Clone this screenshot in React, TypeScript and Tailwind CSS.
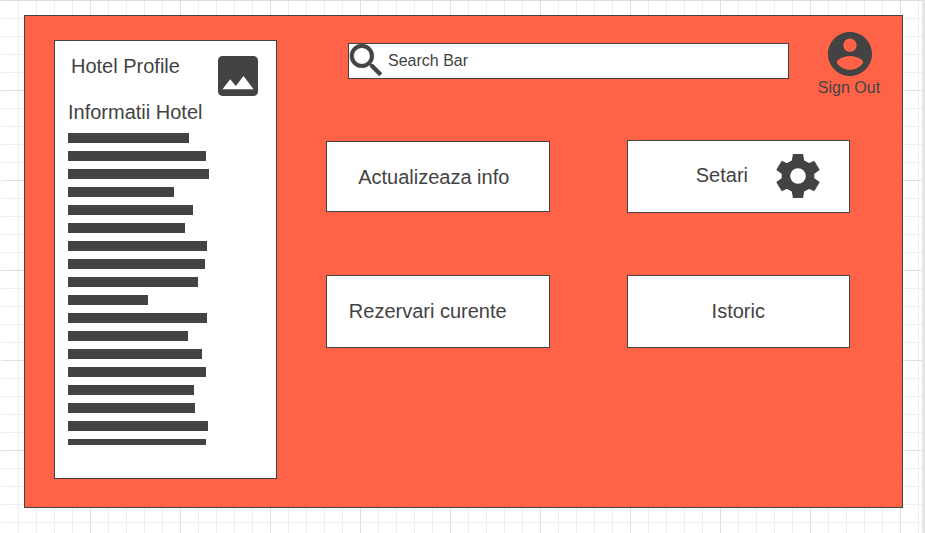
import type { ReactNode } from "react";

const barWidths = [121, 138, 141, 106, 125, 117, 139, 137, 130, 80, 139, 120, 134, 138, 126, 127, 140, 138];

function ImageIcon() {
  return (
    <svg viewBox="3 3 18 18" className="size-10 shrink-0" fill="currentColor" aria-hidden="true">
      <path d="M21 19V5c0-1.100-.9-2-2-2H5c-1.100 0-2 .9-2 2v14c0 1.100.9 2 2 2h14c1.100 0 2-.9 2-2zM8.500 13.500l2.500 3.010L14.500 12l4.500 6H5l3.500-4.500z" />
    </svg>
  );
}

function SearchIcon() {
  return (
    <svg
      viewBox="3 3 17.500 17.500"
      className="size-8 shrink-0 overflow-visible"
      fill="currentColor"
      stroke="currentColor"
      strokeWidth="0.3"
      aria-hidden="true"
    >
      <path d="M15.500 14h-.79l-.28-.27C15.410 12.590 16 11.110 16 9.500 16 5.910 13.090 3 9.500 3S3 5.910 3 9.500 5.910 16 9.500 16c1.610 0 3.090-.59 4.230-1.570l.27.28v.79l5 4.990L20.490 19l-4.990-5zm-6 0C7.010 14 5 11.990 5 9.500S7.010 5 9.500 5 14 7.010 14 9.500 11.990 14 9.500 14z" />
    </svg>
  );
}

function AccountIcon() {
  return (
    <svg viewBox="2 2 20 20" className="size-11 shrink-0" fill="currentColor" aria-hidden="true">
      <path d="M12 2C6.480 2 2 6.480 2 12s4.480 10 10 10 10-4.480 10-10S17.520 2 12 2zm0 3c1.660 0 3 1.340 3 3s-1.340 3-3 3-3-1.340-3-3 1.340-3 3-3zm0 14.200c-2.500 0-4.710-1.280-6-3.220.03-1.990 4-3.080 6-3.080 1.990 0 5.970 1.090 6 3.080-1.290 1.940-3.500 3.220-6 3.220z" />
    </svg>
  );
}

function GearIcon() {
  return (
    <svg viewBox="0 0 132 135" className="size-11 shrink-0 overflow-visible" aria-hidden="true">
      <path
        fill="currentColor"
        stroke="currentColor"
        strokeWidth="4"
        strokeLinejoin="round"
        d="M52 2H80L83 21L100 30L115 23L130 48L114 60V75L130 87L115 112L100 105L83 114L80 133H52L49 114L32 105L17 112L2 87L18 75V60L2 48L17 23L32 30L49 21Z"
      />
      <circle cx="66" cy="67.500" r="24" fill="#ffffff" />
    </svg>
  );
}

function Tile({ className, children }: { className: string; children: ReactNode }) {
  return (
    <button type="button" className={`flex items-center border border-[#434343] bg-white text-xl ${className}`}>
      {children}
    </button>
  );
}

function ProfilePanel() {
  return (
    <aside className="w-[223px] shrink-0 border border-[#434343] bg-white pb-[33px] pl-[13px] pr-[18px] pt-[15px]">
      <div className="flex items-start justify-between">
        <h1 className="pl-[3px] text-xl leading-5">Hotel Profile</h1>
        <ImageIcon />
      </div>
      <h2 className="pb-[11px] pt-1.5 text-xl leading-5">Informatii Hotel</h2>
      <div className="flex h-[312px] flex-col gap-2 overflow-hidden">
        {barWidths.map((width, index) => (
          <div key={index} className="h-2.5 shrink-0 bg-[#434343]" style={{ width }} />
        ))}
      </div>
    </aside>
  );
}

export default function App() {
  return (
    <div className="min-h-screen border-l border-r-3 border-t border-l-white border-r-[#e5e5e5] border-t-[#dddddd] bg-white bg-[linear-gradient(to_right,#e0e0e0_1px,transparent_1px),linear-gradient(to_bottom,#e0e0e0_1px,transparent_1px),linear-gradient(to_right,#eeeeee_1px,transparent_1px),linear-gradient(to_bottom,#eeeeee_1px,transparent_1px)] bg-[size:90px_90px,90px_90px,18px_18px,18px_18px] bg-[position:-1px_-1px] pb-[25px] pl-[23px] pr-[19px] pt-3.5 font-['Liberation_Sans',Arial,sans-serif] text-[#434343]">
      <div className="flex items-start border border-[#434343] bg-[#ff6347] pb-7 pl-[29px] pt-6">
        <ProfilePanel />
        <main className="min-w-0 flex-1">
          <header className="-mt-2 flex items-start gap-6 pl-[71px] pr-[15px]">
            <label className="mt-[11px] flex h-9 min-w-0 flex-1 items-start border border-[#434343] bg-white pl-px">
              <SearchIcon />
              <input
                type="search"
                aria-label="Search Bar"
                placeholder="Search Bar"
                className="h-full min-w-0 flex-1 bg-transparent pl-1.5 text-base outline-none placeholder:text-[#434343] placeholder:opacity-100"
              />
            </label>
            <button type="button" className="flex w-[74px] flex-col items-center text-base">
              <AccountIcon />
              <span className="pr-0.5">Sign Out</span>
            </button>
          </header>
          <nav className="mt-10 grid grid-cols-2 items-center gap-x-[77px] gap-y-[62px] pl-[49px] pr-[52px]">
            <Tile className="h-[71px] justify-center pr-2">Actualizeaza info</Tile>
            <Tile className="h-[73px] justify-end gap-7 pb-0.5 pr-[29px]">
              <span className="pb-0.5">Setari</span>
              <GearIcon />
            </Tile>
            <Tile className="h-[73px] justify-center pb-0.5 pr-5">Rezervari curente</Tile>
            <Tile className="h-[73px] justify-center pb-0.5">Istoric</Tile>
          </nav>
        </main>
      </div>
    </div>
  );
}
